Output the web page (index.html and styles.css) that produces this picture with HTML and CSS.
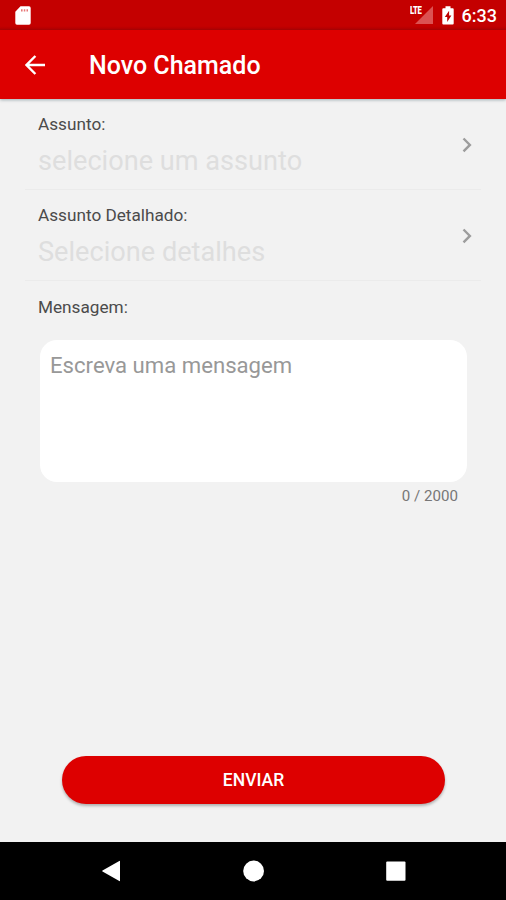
FILE: index.html
```html
<!DOCTYPE html>
<html lang="pt-BR">
<head>
<meta charset="utf-8">
<title>Novo Chamado</title>
<link rel="stylesheet" href="styles.css">
</head>
<body>
<div class="status">
  <svg class="sd" width="16" height="19" viewBox="0 0 16 19"><path d="M5.5.3H14a1.7 1.7 0 0 1 1.7 1.7v15a1.7 1.7 0 0 1-1.7 1.7H2A1.7 1.7 0 0 1 .3 17V5.8z" fill="#fff"/><path d="M6 3.2h1.6v2.3H6zM8.8 3.2h1.5v2.3H8.8zM11.5 3.2H13v2.3h-1.5z" fill="#e87878"/></svg>
  <div class="signal"><span class="lte">LTE</span><svg width="18" height="18" viewBox="0 0 18 18"><path d="M18 0v18H0z" fill="#db5252"/></svg></div>
  <svg class="battery" width="12" height="19" viewBox="0 0 12 19"><path d="M3.5.3h5v1.9h2.2q1 0 1 1v14.3q0 1-1 1H1.3q-1 0-1-1V3.2q0-1 1-1h2.2z" fill="#fff"/><path d="M7.1 4.8 2.8 11h2.4v5.1L9.4 9.5H7.1z" fill="#bd0000"/></svg>
  <span class="clock">6:33</span>
</div>
<header class="bar">
  <svg class="back" width="20" height="20" viewBox="0 0 20 20" fill="none" stroke="#fff" stroke-width="2.4"><path d="M20 10H1.8M10.4 1 1.5 10l8.9 9"/></svg>
  <h1 class="title">Novo Chamado</h1>
</header>
<main class="form">
  <section class="row">
    <div><div class="label">Assunto:</div><div class="value">selecione um assunto</div></div>
    <svg class="chevron" width="10" height="16" viewBox="0 0 10 16"><path d="m1.5 1.5 6.4 6.4-6.4 6.4" fill="none" stroke="#9d9d9d" stroke-width="2.4"/></svg>
  </section>
  <section class="row">
    <div><div class="label">Assunto Detalhado:</div><div class="value">Selecione detalhes</div></div>
    <svg class="chevron" width="10" height="16" viewBox="0 0 10 16"><path d="m1.5 1.5 6.4 6.4-6.4 6.4" fill="none" stroke="#9d9d9d" stroke-width="2.4"/></svg>
  </section>
  <section class="message">
    <div class="label">Mensagem:</div>
    <div class="box">Escreva uma mensagem</div>
    <div class="count">0 / 2000</div>
  </section>
  <button class="send">ENVIAR</button>
</main>
<nav class="nav">
  <svg width="22" height="22" viewBox="0 0 22 22"><path d="M19 1.2v19.6q0 .6-.7.2L1.5 11.5q-.7-.5 0-1L18.3 1q.7-.4.7.2z" fill="#fff"/></svg>
  <svg width="22" height="22" viewBox="0 0 22 22"><circle cx="10.6" cy="11" r="10.4" fill="#fff"/></svg>
  <svg width="22" height="22" viewBox="0 0 22 22"><rect x="1.2" y="1.5" width="19.3" height="19.3" rx="1" fill="#fff"/></svg>
</nav>
</body>
</html>
```
FILE: styles.css
```css
* { box-sizing: border-box; }
body {
  margin: 0;
  width: 506px;
  height: 900px;
  display: flex;
  flex-direction: column;
  overflow: hidden;
  background: #f2f2f2;
  font-family: Roboto, sans-serif;
}
.status {
  height: 30px;
  flex: none;
  display: flex;
  align-items: center;
  padding: 0 9px 0 15px;
  background: linear-gradient(#c40000 26px, #b00000);
  color: #fff;
}
.signal { position: relative; height: 18px; margin-left: auto; margin-right: 9px; }
.signal svg { display: block; }
.lte {
  position: absolute;
  left: -5px;
  top: 0;
  font-size: 11px;
  line-height: 9px;
  font-weight: 900;
  letter-spacing: -0.5px;
  transform: scaleX(0.7);
  transform-origin: left;
}
.battery { margin-right: 8px; }
.clock { font-size: 18px; font-weight: 500; line-height: 30px; padding-top: 2px; }
.bar {
  height: 69px;
  flex: none;
  display: flex;
  align-items: center;
  padding-left: 25px;
  background: #dd0000;
  box-shadow: 0 1px 3px rgba(0, 50, 60, 0.35);
}
.title { margin: 3px 0 0 44px; color: #fff; font-size: 25px; font-weight: 500; line-height: 32px; }
.form { flex: 1; display: flex; flex-direction: column; padding: 0 25px; }
.row {
  height: 91px;
  display: flex;
  justify-content: space-between;
  padding: 15px 9px 0 13px;
  border-bottom: 1px solid #ebebeb;
}
.label { font-size: 17.2px; line-height: 20px; color: #4b4b4b; }
.value { margin-top: 10px; font-size: 27.15px; line-height: 34px; color: #dedede; }
.chevron { margin-top: 22.5px; }
.message { padding: 16px 13px 0; }
.box {
  width: 427px;
  height: 142px;
  margin: 23px 0 0 2px;
  padding: 11px 10px;
  border-radius: 17px;
  background: #fff;
  color: #989898;
  font-size: 22.15px;
  line-height: 28px;
}
.count { margin: 4px 10px 0 0; text-align: right; color: #777; font-size: 15.1px; line-height: 20px; }
.send {
  width: 383px;
  height: 48px;
  margin: auto 0 38px 37px;
  padding: 0;
  border: 0;
  border-radius: 24px;
  background: #dd0000;
  color: #fff;
  font: 500 17.5px/24px Roboto, sans-serif;
  box-shadow: 0 2px 3px rgba(0, 0, 0, 0.28);
}
.nav {
  height: 58px;
  flex: none;
  display: flex;
  justify-content: space-between;
  align-items: center;
  padding: 0 99px 0 101px;
  background: #000;
}
```
